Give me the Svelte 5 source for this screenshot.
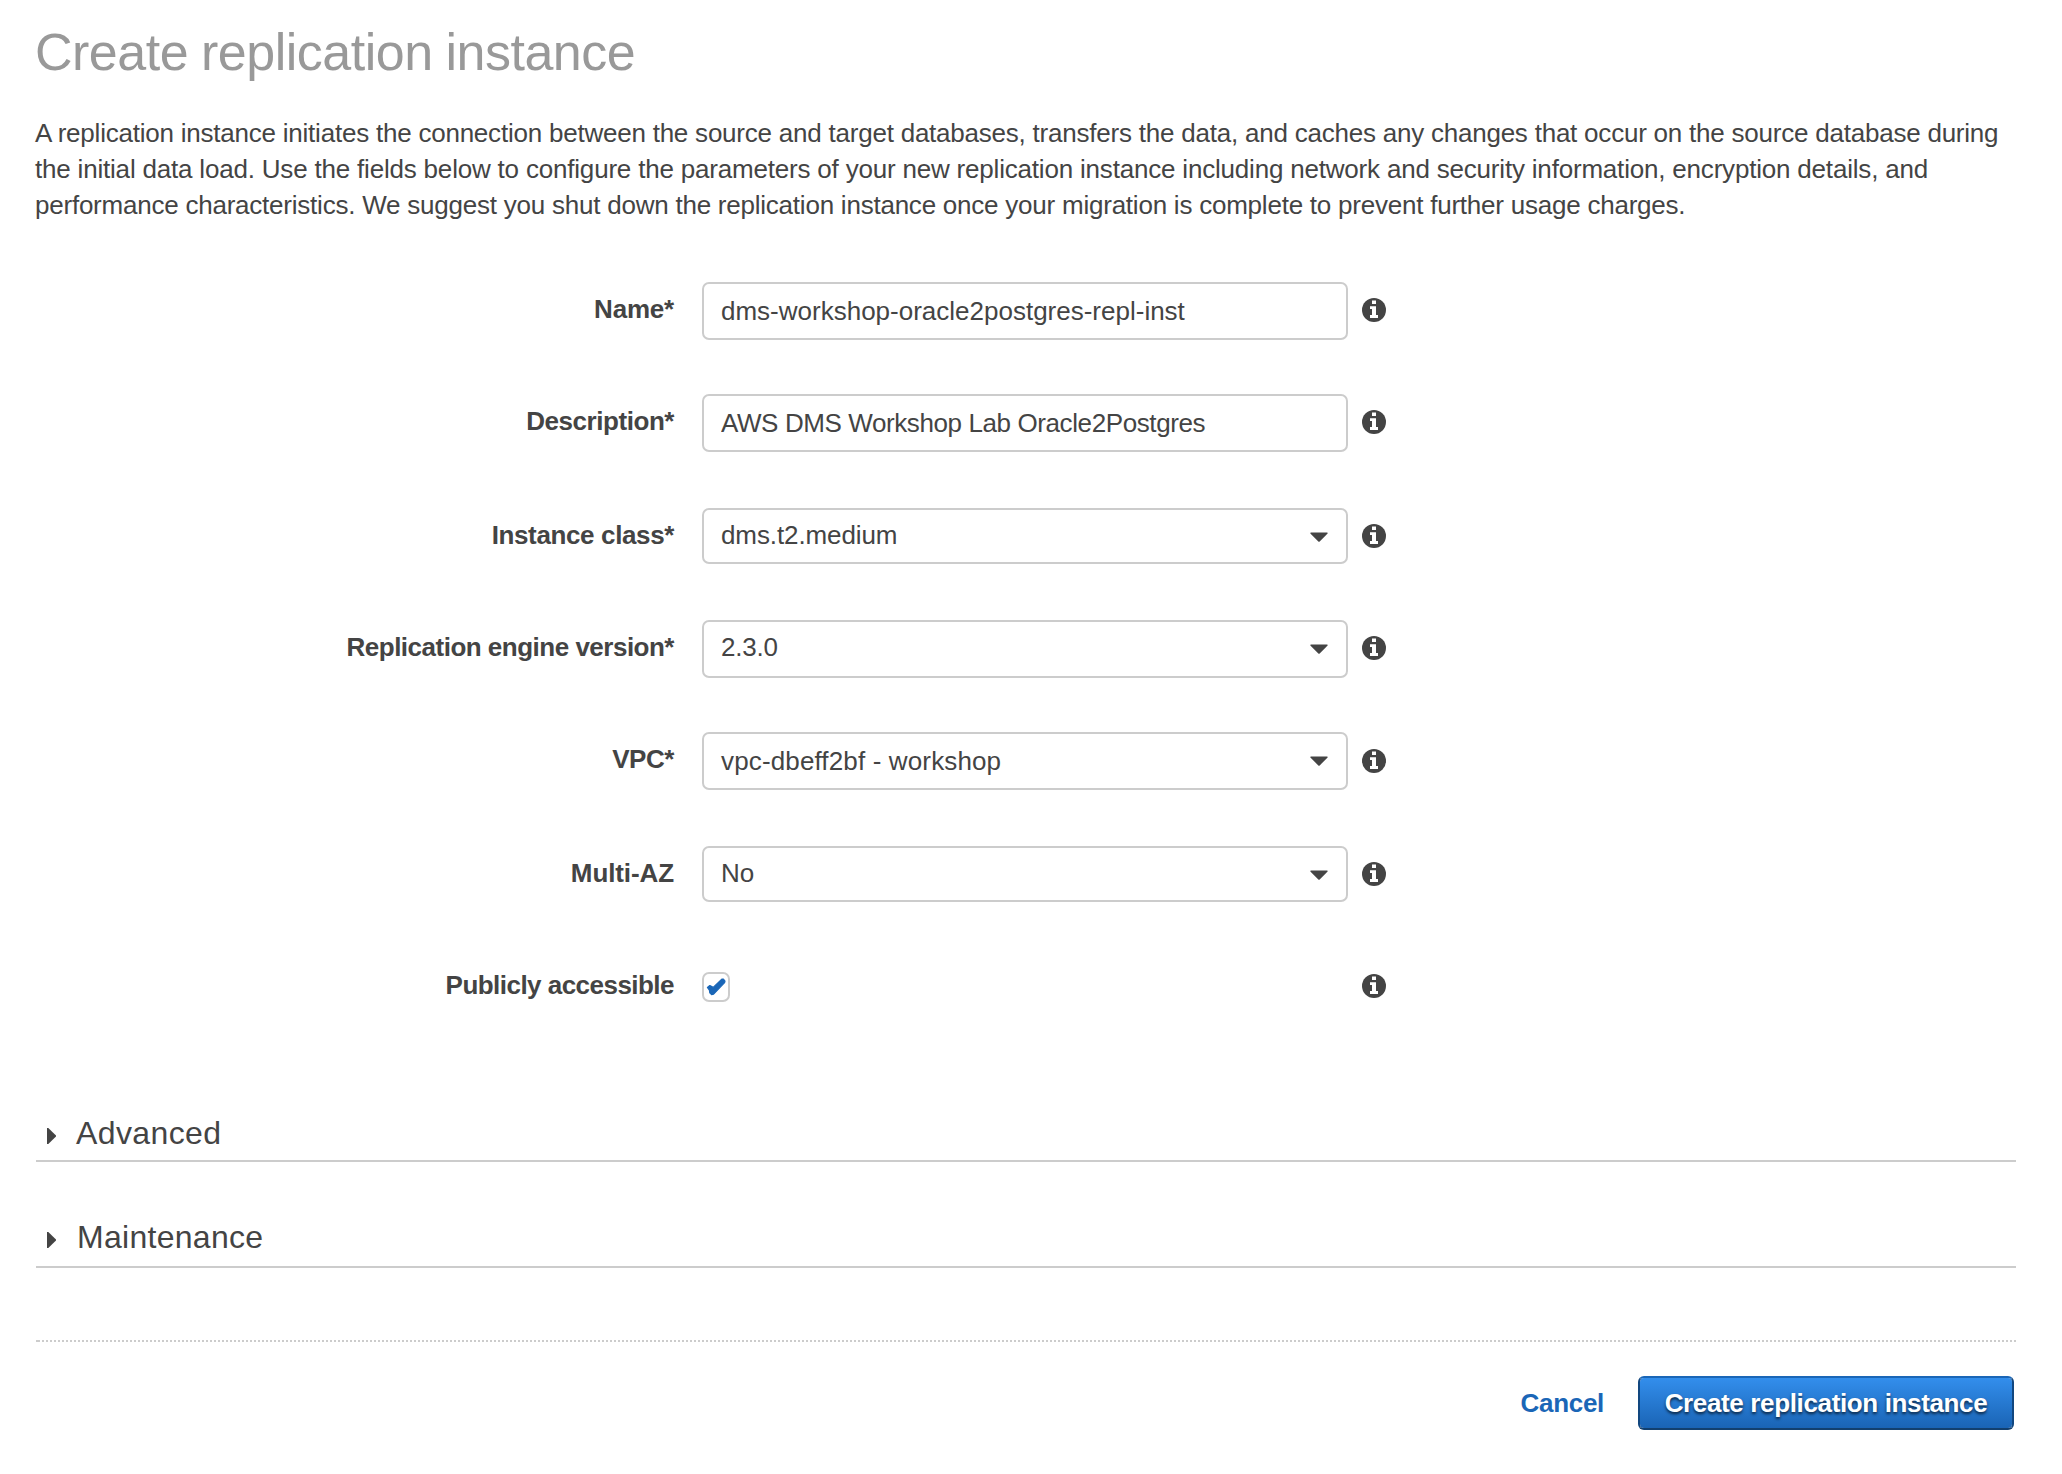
<script>
  const fields = [
    { id: 'name', label: 'Name*', kind: 'text', value: 'dms-workshop-oracle2postgres-repl-inst' },
    { id: 'description', label: 'Description*', kind: 'text', value: 'AWS DMS Workshop Lab Oracle2Postgres' },
    { id: 'class', label: 'Instance class*', kind: 'select', value: 'dms.t2.medium' },
    { id: 'engine', label: 'Replication engine version*', kind: 'select', value: '2.3.0' },
    { id: 'vpc', label: 'VPC*', kind: 'select', value: 'vpc-dbeff2bf - workshop' },
    { id: 'multiaz', label: 'Multi-AZ', kind: 'select', value: 'No' },
    { id: 'public', label: 'Publicly accessible', kind: 'check', value: '' }
  ];
  const sections = ['Advanced', 'Maintenance'];
</script>

<main>
  <h1>Create replication instance</h1>
  <p>
    <span class="l1">A replication instance initiates the connection between the source and target databases, transfers the data, and caches any changes that occur on the source database during</span>
    <span class="l2">the initial data load. Use the fields below to configure the parameters of your new replication instance including network and security information, encryption details, and</span>
    <span class="l3">performance characteristics. We suggest you shut down the replication instance once your migration is complete to prevent further usage charges.</span>
  </p>

  <form>
    {#each fields as f}
      <div class="row {f.id}">
        <span class="label">{f.label}</span>
        {#if f.kind === 'text'}
          <input class="box" type="text" value={f.value} aria-label={f.label} />
        {:else if f.kind === 'select'}
          <div class="box select">
            <span>{f.value}</span>
            <svg class="caret" width="18" height="10" viewBox="0 0 18 10">
              <path d="M1 .4H17Q18.2.7 17.4 1.7L9.7 9.4Q9 10 8.3 9.4L.6 1.7Q-.2.7 1 .4Z" fill="#444" />
            </svg>
          </div>
        {:else}
          <span class="check">
            <svg width="20" height="18" viewBox="0 0 20 18">
              <path d="M1.4 9.4L3.8 7.6L7.2 9.4L15.8 1.1L17.4 1L19 3.2L18.6 4.6L7.6 16.2L5.6 16.6L3.8 14.8L3.4 12.2Z" fill="#1a66b7" stroke="#1a66b7" stroke-width="1.2" stroke-linejoin="round" />
            </svg>
          </span>
        {/if}
        <svg class="info" width="24" height="24" viewBox="0 0 24 24">
          <circle cx="12" cy="12" r="12" fill="#444" />
          <path d="M10 2.6H14V6H10ZM8 8.2H14V17H16V20H8V17H10V11H8Z" fill="#fff" />
        </svg>
      </div>
    {/each}
  </form>

  {#each sections as s}
    <section class={s.toLowerCase()}>
      <svg width="9" height="16" viewBox="0 0 9 16"><path d="M0 0H1.3L9 7.4V8.6L1.3 16H0Z" fill="#444" /></svg>
      <h2>{s}</h2>
    </section>
  {/each}

  <footer>
    <a href="#cancel">Cancel</a>
    <button type="button">Create replication instance</button>
  </footer>
</main>

<style>
  :global(body) { background: #fff; }
  main {
    box-sizing: border-box;
    width: 2062px;
    height: 1474px;
    padding: 19px 46px 0 36px;
    color: #444;
    font: 26px/36px "Liberation Sans", Arial, sans-serif;
    overflow: hidden;
  }
  h1 {
    margin: 0 0 0 -1px;
    font-size: 52px;
    line-height: 66px;
    font-weight: 400;
    letter-spacing: -0.5px;
    word-spacing: -1px;
    color: #999;
  }
  p { margin: 30px 0 0 -1px; white-space: nowrap; }
  p span { display: block; }
  .l1 { letter-spacing: -0.224px; }
  .l2 { letter-spacing: -0.195px; }
  .l3 { letter-spacing: -0.228px; }
  form { margin-top: 59px; }
  .row {
    display: grid;
    grid-template-columns: 666px 660px 24px;
    align-items: start;
    height: 112px;
  }
  .description, .vpc { height: 114px; }
  .label {
    width: 638px;
    padding-top: 9px;
    text-align: right;
    font-weight: 700;
    letter-spacing: -0.45px;
  }
  .name .label { letter-spacing: -0.2px; }
  .multiaz .label { letter-spacing: -0.1px; }
  .class .label { letter-spacing: -0.37px; }
  .engine .label { letter-spacing: -0.5px; }
  .public .label { letter-spacing: -0.53px; }
  .box {
    box-sizing: border-box;
    width: 646px;
    height: 58px;
    margin: 0;
    padding: 0 17px;
    border: 2px solid #ccc;
    border-radius: 7px;
    background: #fff;
    color: #444;
    font: inherit;
    outline: none;
  }
  .description .box { letter-spacing: -0.4px; }
  .class .box { letter-spacing: -0.1px; }
  .engine .box { letter-spacing: -0.2px; }
  .vpc .box { padding-top: 2px; letter-spacing: 0.14px; }
  .select {
    display: flex;
    justify-content: space-between;
    align-items: flex-start;
    line-height: 50px;
  }
  .class .box, .multiaz .box { height: 56px; }
  .caret { margin: 22px 1px 0 0; }
  .vpc .caret { margin-top: 20px; }
  .info { margin-top: 16px; }
  .vpc .info { margin-top: 17px; }
  .check {
    box-sizing: border-box;
    display: flex;
    width: 28px;
    height: 30px;
    margin-top: 14px;
    padding: 4px 2px;
    border: 2px solid #ccc;
    border-radius: 7px;
  }
  section {
    display: flex;
    box-sizing: border-box;
    width: 1980px;
    height: 54px;
    padding-left: 11px;
    border-bottom: 2px solid #ccc;
  }
  section svg { margin-top: 20px; }
  section h2 {
    margin: 3px 0 0 21px;
    font-size: 32px;
    line-height: 44px;
    font-weight: 400;
    letter-spacing: 0.28px;
  }
  .advanced { margin-top: 38px; }
  .advanced h2 { margin-left: 20px; letter-spacing: 0.38px; }
  .maintenance { margin-top: 50px; height: 56px; }
  footer {
    display: flex;
    justify-content: flex-end;
    box-sizing: border-box;
    width: 1980px;
    margin-top: 72px;
    padding: 36px 2px 0 0;
    font-weight: 700;
    background:
      linear-gradient(#ccc, #ccc) 0 0 / 2px 2px no-repeat,
      repeating-linear-gradient(90deg, transparent 0 2px, #ccc 2px 4px) 0 0 / 100% 2px no-repeat;
  }
  a {
    margin: 9px 34px 0 0;
    color: #1a66b7;
    text-decoration: none;
    letter-spacing: -0.3px;
  }
  button {
    box-sizing: border-box;
    width: 376px;
    height: 54px;
    padding: 0;
    border: 2px solid;
    border-color: #1a66b7 #12477f #12406f;
    border-radius: 6px;
    background: linear-gradient(#338eec, #1a64b5) padding-box;
    color: #fff;
    font: inherit;
    letter-spacing: -0.36px;
    text-shadow: 0 2px 3px rgba(0, 0, 0, 0.7);
    white-space: nowrap;
  }
</style>
